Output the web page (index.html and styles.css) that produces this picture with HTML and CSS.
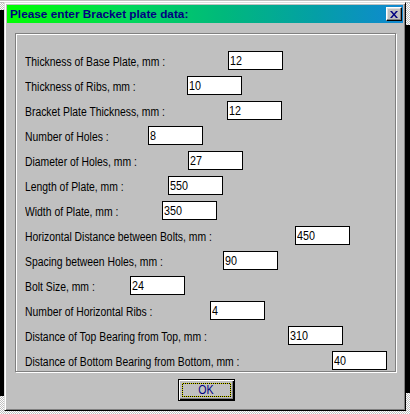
FILE: index.html
```html
<!DOCTYPE html>
<html>
<head>
<meta charset="utf-8">
<title>Bracket plate data</title>
<link rel="stylesheet" href="styles.css">
</head>
<body>
<div class="screen">
  <div class="dialog">
    <div class="titlebar">
      <span class="title">Please enter Bracket plate data:</span>
      <span class="close"><svg width="8" height="7" viewBox="0 0 8 7"><path d="M0 0h2l2 2.5 2-2.5h2l-3 3.5 3 3.5h-2l-2-2.5-2 2.5h-2l3-3.5z" fill="#000080"/></svg></span>
    </div>
    <div class="content">
      <div class="group">
        <div class="row"><span class="lbl">Thickness of Base Plate, mm :</span><span class="field"><span class="val">12</span></span></div>
        <div class="row"><span class="lbl">Thickness of Ribs, mm :</span><span class="field"><span class="val">10</span></span></div>
        <div class="row"><span class="lbl">Bracket Plate Thickness, mm :</span><span class="field"><span class="val">12</span></span></div>
        <div class="row"><span class="lbl">Number of Holes :</span><span class="field"><span class="val">8</span></span></div>
        <div class="row"><span class="lbl">Diameter of Holes, mm :</span><span class="field"><span class="val">27</span></span></div>
        <div class="row"><span class="lbl">Length of Plate, mm :</span><span class="field"><span class="val">550</span></span></div>
        <div class="row"><span class="lbl">Width of Plate, mm :</span><span class="field"><span class="val">350</span></span></div>
        <div class="row"><span class="lbl">Horizontal Distance between Bolts, mm :</span><span class="field"><span class="val">450</span></span></div>
        <div class="row"><span class="lbl">Spacing between Holes, mm :</span><span class="field"><span class="val">90</span></span></div>
        <div class="row"><span class="lbl">Bolt Size, mm :</span><span class="field"><span class="val">24</span></span></div>
        <div class="row"><span class="lbl">Number of Horizontal Ribs :</span><span class="field"><span class="val">4</span></span></div>
        <div class="row"><span class="lbl">Distance of Top Bearing from Top, mm :</span><span class="field"><span class="val">310</span></span></div>
        <div class="row"><span class="lbl">Distance of Bottom Bearing from Bottom, mm :</span><span class="field"><span class="val">40</span></span></div>
      </div>
      <div class="actions">
        <span class="ok"><span class="focus"><span class="face"><span class="oktext">OK</span></span></span></span>
      </div>
    </div>
  </div>
</div>
</body>
</html>
```
FILE: styles.css
```css
html, body {
  margin: 0;
  padding: 0;
}
body {
  width: 410px;
  height: 414px;
  overflow: hidden;
  font-family: "Liberation Sans", Arial, sans-serif;
  font-size: 12.5px;
  color: #000;
}
.screen {
  width: 410px;
  height: 414px;
  overflow: hidden;
  background:
    linear-gradient(to bottom, #c0c0c0 0 1px, #ffffff 1px 2px, #c0c0c0 2px 3px) 0 0 / 410px 3px no-repeat,
    linear-gradient(#000, #000) 0 10px / 4px 386px no-repeat,
    linear-gradient(#000, #000) 406px 25px / 4px 368px no-repeat,
    repeating-conic-gradient(#ffffff 0 25%, #c0c0c0 0 50%) 0 0 / 2px 2px;
  padding-top: 2px;
  padding-left: 4px;
  box-sizing: border-box;
}
.dialog {
  width: 402px;
  height: 409px;
  box-sizing: border-box;
  background: #c0c0c0;
  border: 1px solid;
  border-color: #dfdfdf #000 #000 #dfdfdf;
  box-shadow: inset 1px 1px #fff, inset -1px -1px #808080;
  padding: 2px;
}
.titlebar {
  height: 18px;
  display: flex;
  align-items: center;
  justify-content: space-between;
  padding: 0 1px 0 3px;
  background: linear-gradient(to right, #00ff00 0%, #00d85a 30%, #00b87c 55%, #049fa6 78%, #1088d2 100%);
}
.title {
  font-weight: bold;
  font-size: 11.8px;
  color: #000080;
  white-space: nowrap;
}
.close {
  width: 16px;
  height: 14px;
  box-sizing: border-box;
  background: #c0c0c0;
  border: 1px solid;
  border-color: #fff #000 #000 #fff;
  box-shadow: inset -1px -1px #808080, inset 1px 1px #dfdfdf;
  display: flex;
  align-items: center;
  justify-content: center;
}
.close svg {
  display: block;
}
.content {
  padding: 10px 7px 0 8px;
}
.group {
  width: 381px;
  height: 339px;
  box-sizing: border-box;
  border: 1px solid #808080;
  box-shadow: inset 1px 1px #fff, 1px 1px #fff;
  padding: 17px 0 1px 9px;
  display: flex;
  flex-direction: column;
  gap: 6px;
}
.row {
  display: flex;
  align-items: center;
  height: 19px;
}
.lbl {
  flex: none;
  white-space: nowrap;
  padding-top: 2px;
  transform: scaleX(0.83);
  transform-origin: 0 50%;
}
.row:nth-child(1) .lbl { width: 203px; }
.row:nth-child(2) .lbl { width: 162px; }
.row:nth-child(3) .lbl { width: 202px; }
.row:nth-child(4) .lbl { width: 123px; }
.row:nth-child(5) .lbl { width: 163px; }
.row:nth-child(6) .lbl { width: 143px; }
.row:nth-child(7) .lbl { width: 137px; }
.row:nth-child(8) .lbl { width: 270px; }
.row:nth-child(9) .lbl { width: 198px; }
.row:nth-child(10) .lbl { width: 105px; }
.row:nth-child(11) .lbl { width: 185px; }
.row:nth-child(12) .lbl { width: 263px; }
.row:nth-child(13) .lbl { width: 307px; }
.field {
  flex: none;
  width: 55px;
  height: 19px;
  box-sizing: border-box;
  border: 1px solid #000;
  background: #fff;
  padding: 1px 0 0 1px;
  line-height: 16px;
}
.val {
  display: inline-block;
  transform: scaleX(0.86);
  transform-origin: 0 50%;
}
.actions {
  display: flex;
  justify-content: center;
  padding-top: 7px;
  padding-left: 1px;
}
.ok {
  width: 57px;
  height: 22px;
  box-sizing: border-box;
  border: 1px solid #000;
  background: #c0c0c0;
  box-shadow: inset 1px 1px #fff, inset -1px -1px #000, inset -2px -2px #808080;
  padding: 3px;
  display: flex;
}
.focus {
  flex: 1;
  display: flex;
  padding: 1px;
  background: repeating-conic-gradient(#000 0 25%, #d8d800 0 50%) 0 0 / 2px 2px;
}
.face {
  flex: 1;
  background: #c0c0c0;
  color: #000080;
  font-size: 12.5px;
  line-height: 12px;
  text-align: center;
}
.oktext {
  display: inline-block;
  transform: scaleX(0.85);
}
```
